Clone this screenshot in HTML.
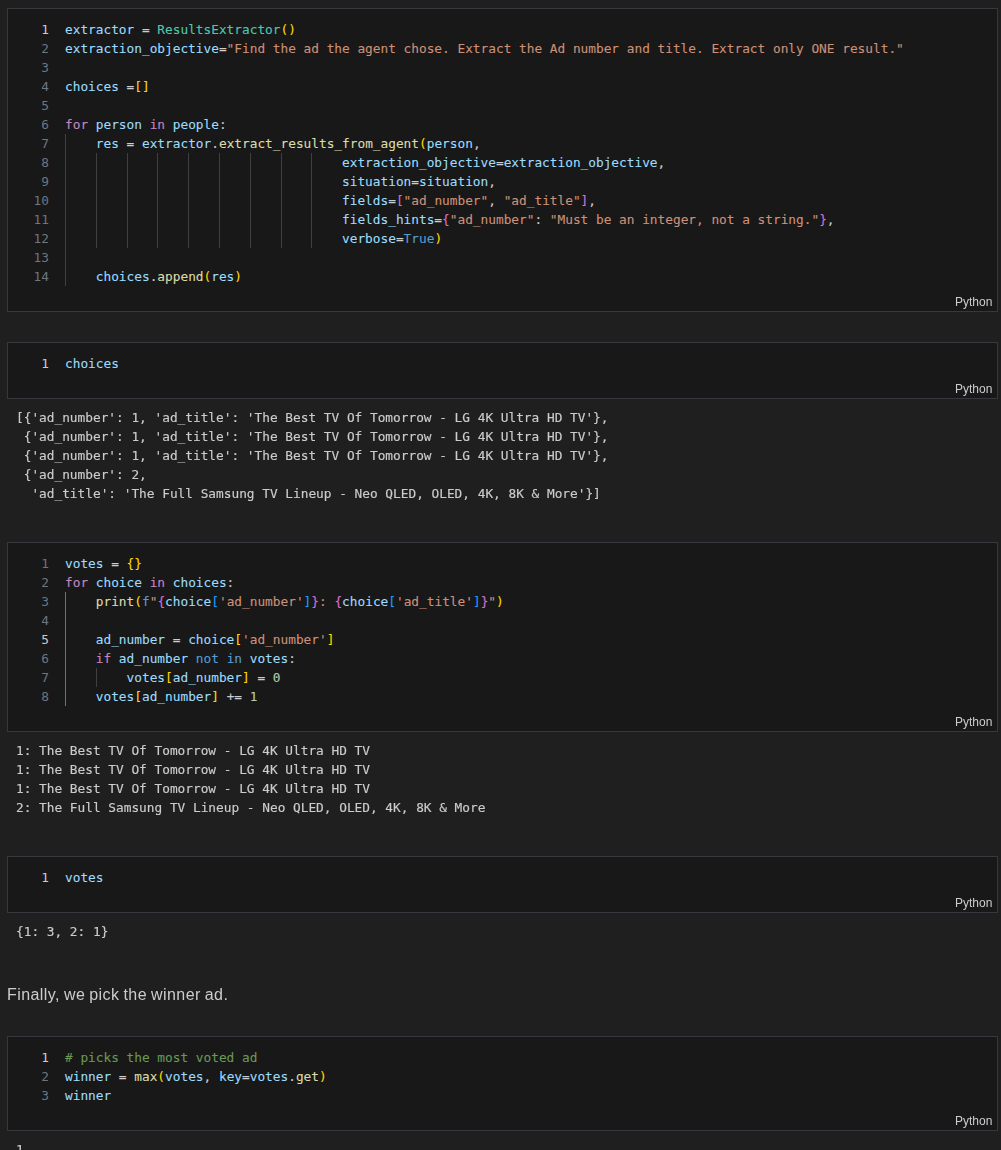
<!DOCTYPE html>
<html lang="en">
<head>
<meta charset="utf-8">
<title>Notebook</title>
<style>
html,body{margin:0;padding:0;}
body{width:1001px;height:1150px;overflow:hidden;background:#1f1f1f;position:relative;
 font-family:"DejaVu Sans Mono","Liberation Mono",monospace;}
.cell{position:absolute;left:7px;width:991px;box-sizing:border-box;border:1px solid #37373d;background:#181818;}
.row{position:absolute;left:0;height:19px;line-height:19px;white-space:pre;font-size:12.79px;letter-spacing:0;}
.ln{position:absolute;left:0;width:41px;text-align:right;color:#6e7681;}
.ln.a{color:#cccccc;}
.code{-webkit-text-stroke:0.1px;position:absolute;left:57px;top:0;white-space:pre;}
.g{position:absolute;width:1px;background:#404040;display:block;}
.ga{background:#707070;}
.lang{will-change:transform;position:absolute;right:5px;bottom:-2px;height:22px;line-height:22px;font-family:"Liberation Sans",sans-serif;font-size:12px;color:#cccccc;}
.out{-webkit-text-stroke:0.15px;will-change:transform;position:absolute;left:16px;margin:0;font-family:"DejaVu Sans Mono","Liberation Mono",monospace;font-size:12.79px;letter-spacing:0;line-height:19px;color:#cccccc;white-space:pre;}
.md{will-change:transform;position:absolute;left:7px;top:983px;letter-spacing:0.42px;word-spacing:-0.8px;margin:0;font-family:"Liberation Sans",sans-serif;font-size:16px;line-height:24px;color:#cccccc;white-space:pre;}
.v{color:#9cdcfe}.o{color:#cccccc}.s{color:#ce9178}.k{color:#c586c0}.b{color:#569cd6}
.f{color:#dcdcaa}.c{color:#4ec9b0}.n{color:#b5cea8}.m{color:#6a9955}
.b1{color:#ffd700}.b2{color:#da70d6}.b3{color:#179fff}
</style>
</head>
<body>
<div class="cell" style="top:8px;height:304px">
<i class="g" style="left:57px;top:125px;height:152px"></i><i class="g" style="left:88px;top:144px;height:95px"></i><i class="g" style="left:119px;top:144px;height:95px"></i><i class="g" style="left:149px;top:144px;height:95px"></i><i class="g" style="left:180px;top:144px;height:95px"></i><i class="g" style="left:211px;top:144px;height:95px"></i><i class="g" style="left:242px;top:144px;height:95px"></i><i class="g" style="left:273px;top:144px;height:95px"></i><i class="g" style="left:303px;top:144px;height:95px"></i><div class="row" style="top:11px"><span class="ln a">1</span><span class="code"><span class="v">extractor</span><span class="o"> = </span><span class="c">ResultsExtractor</span><span class="b1">()</span></span></div>
<div class="row" style="top:30px"><span class="ln">2</span><span class="code"><span class="v">extraction_objective</span><span class="o">=</span><span class="s">"Find the ad the agent chose. Extract the Ad number and title. Extract only ONE result."</span></span></div>
<div class="row" style="top:49px"><span class="ln">3</span><span class="code"></span></div>
<div class="row" style="top:68px"><span class="ln">4</span><span class="code"><span class="v">choices</span><span class="o"> =</span><span class="b1">[]</span></span></div>
<div class="row" style="top:87px"><span class="ln">5</span><span class="code"></span></div>
<div class="row" style="top:106px"><span class="ln">6</span><span class="code"><span class="k">for</span><span class="v"> person </span><span class="k">in</span><span class="v"> people</span><span class="o">:</span></span></div>
<div class="row" style="top:125px"><span class="ln">7</span><span class="code"><span class="v">    res</span><span class="o"> = </span><span class="v">extractor</span><span class="o">.</span><span class="f">extract_results_from_agent</span><span class="b1">(</span><span class="v">person</span><span class="o">,</span></span></div>
<div class="row" style="top:144px"><span class="ln">8</span><span class="code"><span class="v">                                    extraction_objective</span><span class="o">=</span><span class="v">extraction_objective</span><span class="o">,</span></span></div>
<div class="row" style="top:163px"><span class="ln">9</span><span class="code"><span class="v">                                    situation</span><span class="o">=</span><span class="v">situation</span><span class="o">,</span></span></div>
<div class="row" style="top:182px"><span class="ln">10</span><span class="code"><span class="v">                                    fields</span><span class="o">=</span><span class="b2">[</span><span class="s">"ad_number"</span><span class="o">, </span><span class="s">"ad_title"</span><span class="b2">]</span><span class="o">,</span></span></div>
<div class="row" style="top:201px"><span class="ln">11</span><span class="code"><span class="v">                                    fields_hints</span><span class="o">=</span><span class="b2">{</span><span class="s">"ad_number"</span><span class="o">: </span><span class="s">"Must be an integer, not a string."</span><span class="b2">}</span><span class="o">,</span></span></div>
<div class="row" style="top:220px"><span class="ln">12</span><span class="code"><span class="v">                                    verbose</span><span class="o">=</span><span class="b">True</span><span class="b1">)</span></span></div>
<div class="row" style="top:239px"><span class="ln">13</span><span class="code"></span></div>
<div class="row" style="top:258px"><span class="ln">14</span><span class="code"><span class="v">    choices</span><span class="o">.</span><span class="f">append</span><span class="b1">(</span><span class="v">res</span><span class="b1">)</span></span></div>
<span class="lang">Python</span>
</div>
<div class="cell" style="top:342px;height:57px">
<div class="row" style="top:11px"><span class="ln a">1</span><span class="code"><span class="v">choices</span></span></div>
<span class="lang">Python</span>
</div>
<pre class="out" style="top:408px">[{'ad_number': 1, 'ad_title': 'The Best TV Of Tomorrow - LG 4K Ultra HD TV'},
 {'ad_number': 1, 'ad_title': 'The Best TV Of Tomorrow - LG 4K Ultra HD TV'},
 {'ad_number': 1, 'ad_title': 'The Best TV Of Tomorrow - LG 4K Ultra HD TV'},
 {'ad_number': 2,
  'ad_title': 'The Full Samsung TV Lineup - Neo QLED, OLED, 4K, 8K &amp; More'}]</pre>
<div class="cell" style="top:542px;height:190px">
<i class="g ga" style="left:57px;top:49px;height:114px"></i><i class="g" style="left:88px;top:125px;height:19px"></i><div class="row" style="top:11px"><span class="ln">1</span><span class="code"><span class="v">votes</span><span class="o"> = </span><span class="b1">{}</span></span></div>
<div class="row" style="top:30px"><span class="ln">2</span><span class="code"><span class="k">for</span><span class="v"> choice </span><span class="k">in</span><span class="v"> choices</span><span class="o">:</span></span></div>
<div class="row" style="top:49px"><span class="ln">3</span><span class="code"><span class="f">    print</span><span class="b1">(</span><span class="b">f</span><span class="s">"</span><span class="b2">{</span><span class="v">choice</span><span class="b3">[</span><span class="s">'ad_number'</span><span class="b3">]</span><span class="b2">}</span><span class="s">: </span><span class="b2">{</span><span class="v">choice</span><span class="b3">[</span><span class="s">'ad_title'</span><span class="b3">]</span><span class="b2">}</span><span class="s">"</span><span class="b1">)</span></span></div>
<div class="row" style="top:68px"><span class="ln">4</span><span class="code"></span></div>
<div class="row" style="top:87px"><span class="ln a">5</span><span class="code"><span class="v">    ad_number</span><span class="o"> = </span><span class="v">choice</span><span class="b1">[</span><span class="s">'ad_number'</span><span class="b1">]</span></span></div>
<div class="row" style="top:106px"><span class="ln">6</span><span class="code"><span class="k">    if</span><span class="v"> ad_number </span><span class="b">not</span><span class="v"> </span><span class="b">in</span><span class="v"> votes</span><span class="o">:</span></span></div>
<div class="row" style="top:125px"><span class="ln">7</span><span class="code"><span class="v">        votes</span><span class="b1">[</span><span class="v">ad_number</span><span class="b1">]</span><span class="o"> = </span><span class="n">0</span></span></div>
<div class="row" style="top:144px"><span class="ln">8</span><span class="code"><span class="v">    votes</span><span class="b1">[</span><span class="v">ad_number</span><span class="b1">]</span><span class="o"> += </span><span class="n">1</span></span></div>
<span class="lang">Python</span>
</div>
<pre class="out" style="top:741px">1: The Best TV Of Tomorrow - LG 4K Ultra HD TV
1: The Best TV Of Tomorrow - LG 4K Ultra HD TV
1: The Best TV Of Tomorrow - LG 4K Ultra HD TV
2: The Full Samsung TV Lineup - Neo QLED, OLED, 4K, 8K &amp; More</pre>
<div class="cell" style="top:856px;height:57px">
<div class="row" style="top:11px"><span class="ln a">1</span><span class="code"><span class="v">votes</span></span></div>
<span class="lang">Python</span>
</div>
<pre class="out" style="top:922px">{1: 3, 2: 1}</pre>
<p class="md">Finally, we pick the winner ad.</p>
<div class="cell" style="top:1036px;height:95px">
<div class="row" style="top:11px"><span class="ln a">1</span><span class="code"><span class="m"># picks the most voted ad</span></span></div>
<div class="row" style="top:30px"><span class="ln">2</span><span class="code"><span class="v">winner</span><span class="o"> = </span><span class="f">max</span><span class="b1">(</span><span class="v">votes</span><span class="o">, </span><span class="v">key</span><span class="o">=</span><span class="v">votes</span><span class="o">.</span><span class="f">get</span><span class="b1">)</span></span></div>
<div class="row" style="top:49px"><span class="ln">3</span><span class="code"><span class="v">winner</span></span></div>
<span class="lang">Python</span>
</div>
<pre class="out" style="top:1140px">1</pre>
</body>
</html>
